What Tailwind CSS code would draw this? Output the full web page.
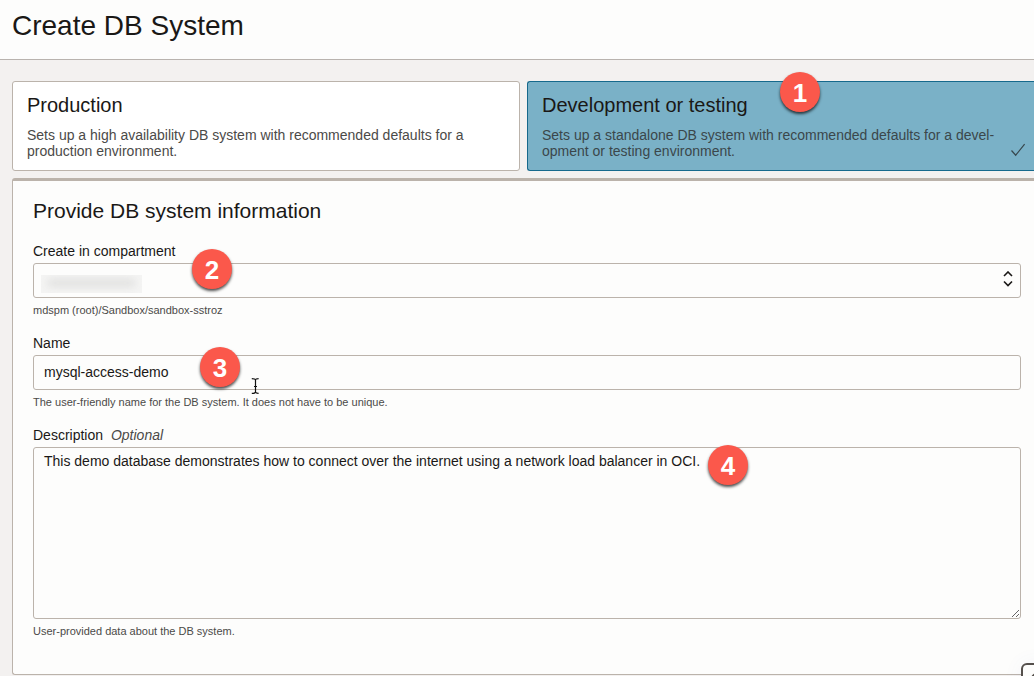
<!DOCTYPE html>
<html lang="en">
<head>
<meta charset="utf-8">
<title>Create DB System</title>
<script src="https://cdn.jsdelivr.net/npm/@tailwindcss/browser@4"></script>
</head>
<body class="bg-[#f3f1f0] font-['Liberation_Sans',Arial,sans-serif] text-sm text-[#1a1816]">
<div class="min-h-screen overflow-hidden">
  <header class="border-b border-[#b9b3ae] bg-[#fdfdfc] px-3 pt-2 pb-4">
    <h1 class="text-[28px] leading-[35px]">Create DB System</h1>
  </header>

  <main class="-mr-px pt-[21px] pl-3">
    <div class="grid grid-cols-2 gap-[7px]" role="radiogroup" aria-label="System type">
      <label class="relative block rounded-[3px] border border-[#bbb3ab] bg-white px-3.5 pt-2.5 pb-[11px]">
        <input type="radio" name="type" class="sr-only">
        <span class="block text-[20px] leading-[27px]">Production</span>
        <span class="mt-2 block pr-5 leading-4 text-[#4b4a48]">Sets up a high availability DB system with recommended defaults for a production environment.</span>
      </label>
      <label class="relative block rounded-l-[3px] border border-r-0 border-[#16698c] bg-[#7ab1c7] px-3.5 pt-2.5 pb-[11px]">
        <input type="radio" name="type" class="sr-only" checked>
        <span class="block text-[20px] leading-[27px]">Development or testing</span>
        <span class="mt-2 block pr-5 leading-4 text-[#3b474b]">Sets up a standalone DB system with recommended defaults for a devel&shy;opment or testing environment.</span>
        <svg class="absolute right-[9px] bottom-3 h-4 w-4" viewBox="0 0 16 16" fill="none" stroke="#37474d" stroke-width="1.2" aria-hidden="true"><path d="M1.5 8.5 5.7 13.2 14.6 2.2"/></svg>
        <span class="absolute -top-2.5 left-[252px] flex h-10 w-10 items-center justify-center rounded-full bg-[#fb584b] pt-[3px] text-[26px] font-bold text-white shadow-[0_2px_3px_rgba(0,0,0,0.7)]">1</span>
      </label>
    </div>

    <section class="mt-[7px] rounded-l-[3px] border border-t-3 border-r-0 border-[#bbb3ab] bg-[#fdfdfc] pt-4 pr-3.5 pb-[22px] pl-5">
      <h2 class="mb-3.5 text-[21px] leading-7">Provide DB system information</h2>

      <div class="relative pb-[13px]">
        <label for="compartment" class="block leading-6">Create in compartment</label>
        <div class="relative">
          <select id="compartment" class="block h-[35px] w-full appearance-none rounded-[3px] border border-[#bbb3ab] bg-[#fdfdfc] px-2.5">
            <option></option>
          </select>
          <span class="absolute top-3 left-2 h-[18px] w-[101px] overflow-hidden bg-[#f5f5f4]"><span class="mx-1.5 mt-1 block h-2 rounded bg-[#dfdfde] blur-xs"></span></span>
          <svg class="pointer-events-none absolute top-2 right-2 h-4 w-2.5" viewBox="0 0 10 16" fill="none" stroke="#1a1816" stroke-width="1.6" aria-hidden="true"><path d="M1 5 5 1 9 5M1 10.5 5 14.5 9 10.5"/></svg>
        </div>
        <p class="pt-1 text-[11px] leading-4 text-[#4b4a48]">mdspm (root)/Sandbox/sandbox-sstroz</p>
        <span class="absolute top-2.5 left-[159px] flex h-10 w-10 items-center justify-center rounded-full bg-[#fb584b] pt-[3px] text-[26px] font-bold text-white shadow-[0_2px_3px_rgba(0,0,0,0.7)]">2</span>
      </div>

      <div class="relative pb-[13px]">
        <label for="name" class="block leading-6">Name</label>
        <input id="name" type="text" value="mysql-access-demo" class="block h-[35px] w-full rounded-[3px] border border-[#bbb3ab] bg-[#fdfdfc] px-2.5 pb-0.5">
        <p class="pt-1 text-[11px] leading-4 text-[#4b4a48]">The user-friendly name for the DB system. It does not have to be unique.</p>
        <span class="absolute top-4 left-[167px] flex h-10 w-10 items-center justify-center rounded-full bg-[#fb584b] pt-[3px] text-[26px] font-bold text-white shadow-[0_2px_3px_rgba(0,0,0,0.7)]">3</span>
        <svg class="pointer-events-none absolute top-[47px] left-[218px] h-4 w-2" viewBox="0 0 8 16" fill="none" stroke="#111" stroke-width="1.2" aria-hidden="true"><path d="M.8.7C2.6.7 4.5 1 4.5 2.2 4.5 1 5.4.7 7.6.7M.8 15.3C2.6 15.3 4.5 15 4.5 13.8 4.5 15 5.4 15.3 7.6 15.3M4.5 2V14M3 8.5H6"/></svg>
      </div>

      <div class="relative pb-[13px]">
        <label for="description" class="block leading-6">Description <i class="pl-1 text-[#4b4a48]">Optional</i></label>
        <textarea id="description" class="block h-[172px] w-full rounded-[3px] border border-[#bbb3ab] bg-[#fdfdfc] px-2.5 py-[5px] leading-4">This demo database demonstrates how to connect over the internet using a network load balancer in OCI.</textarea>
        <p class="pt-1 text-[11px] leading-4 text-[#4b4a48]">User-provided data about the DB system.</p>
        <span class="absolute top-[22px] left-[675px] flex h-10 w-10 items-center justify-center rounded-full bg-[#fb584b] pt-[3px] text-[26px] font-bold text-white shadow-[0_2px_3px_rgba(0,0,0,0.7)]">4</span>
      </div>
    </section>
  </main>
</div>
<button type="button" aria-label="Help" class="fixed -right-[35px] -bottom-[35px] h-12 w-12 rounded-md border-2 border-[#55504c] bg-[#fdfdfc] shadow-[0_0_20px_rgba(90,110,200,0.06)]">
  <svg class="h-full w-full" viewBox="0 0 44 44" fill="none" stroke="#55504c" stroke-width="2" aria-hidden="true"><circle cx="22" cy="22" r="16.5"/></svg>
</button>
</body>
</html>
